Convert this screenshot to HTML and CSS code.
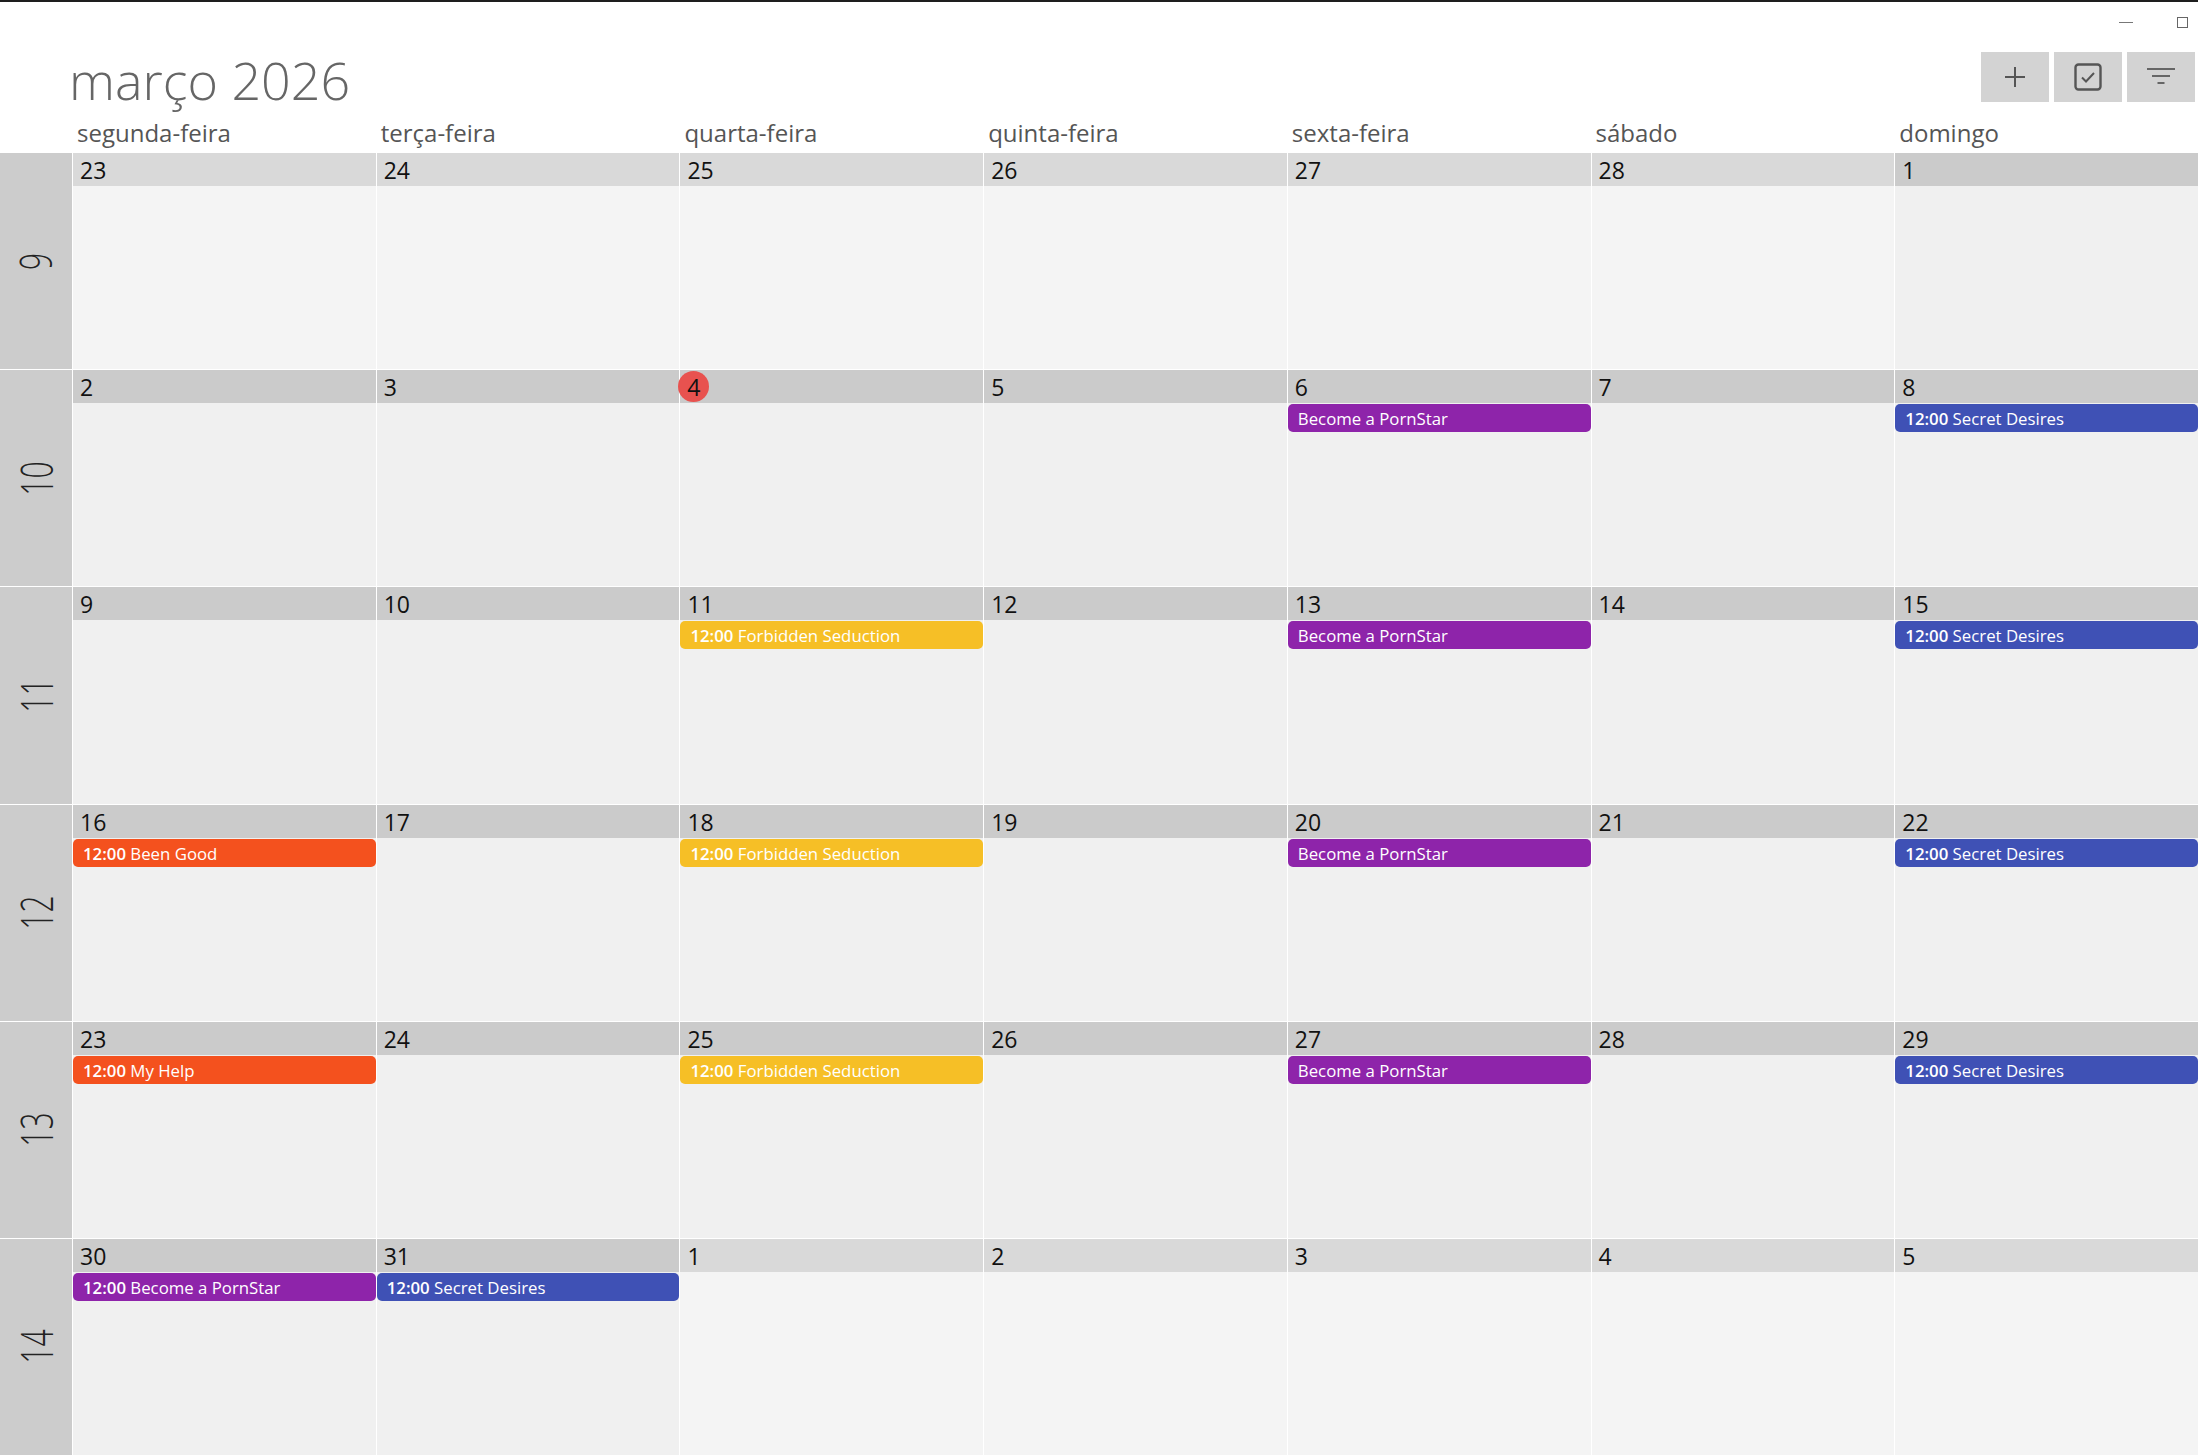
FILE: index.html
```html
<!DOCTYPE html>
<html lang="pt">
  <head>
    <meta charset="UTF-8" />
    <meta name="viewport" content="width=device-width, initial-scale=1.0" />
    <title>Calendário</title>
    <link rel="stylesheet" href="styles.css">
  </head>
  <body>
    <div id="caption">
      <span class="win-min"></span>
      <span class="win-max"></span>
    </div>
    <div id="head">
      <h1 class="title">março 2026</h1>
      <div class="tools">
        <a href="javascript:;" class="tool">
          <svg width="22" height="22" viewBox="0 0 22 22"><path d="M11 1v20M1 11h20" stroke="#555" stroke-width="2" fill="none"/></svg>
        </a>
        <a href="javascript:;" class="tool">
          <svg width="28" height="28" viewBox="0 0 28 28"><rect x="1.5" y="1.5" width="25" height="25" rx="3" stroke="#555" stroke-width="2.4" fill="none"/><path d="M8 14.5l4 4 8-8.5" stroke="#555" stroke-width="2" fill="none"/></svg>
        </a>
        <a href="javascript:;" class="tool">
          <svg width="30" height="20" viewBox="0 0 30 20"><path d="M1 2h28M6 9h18M11.5 16h7" stroke="#666" stroke-width="2.2" fill="none"/></svg>
        </a>
      </div>
    </div>
    <div id="daynames">
      <span></span>
      <span>segunda-feira</span>
      <span>terça-feira</span>
      <span>quarta-feira</span>
      <span>quinta-feira</span>
      <span>sexta-feira</span>
      <span>sábado</span>
      <span>domingo</span>
    </div>
    <div id="month">
      <!-- semana 9 -->
      <div class="week"><span>9</span></div>
      <div class="day other"><div class="date"><span class="num">23</span></div></div>
      <div class="day other"><div class="date"><span class="num">24</span></div></div>
      <div class="day other"><div class="date"><span class="num">25</span></div></div>
      <div class="day other"><div class="date"><span class="num">26</span></div></div>
      <div class="day other"><div class="date"><span class="num">27</span></div></div>
      <div class="day other"><div class="date"><span class="num">28</span></div></div>
      <div class="day"><div class="date"><span class="num">1</span></div></div>

      <!-- semana 10 -->
      <div class="week"><span>10</span></div>
      <div class="day"><div class="date"><span class="num">2</span></div></div>
      <div class="day"><div class="date"><span class="num">3</span></div></div>
      <div class="day today"><div class="date"><span class="num">4</span></div></div>
      <div class="day"><div class="date"><span class="num">5</span></div></div>
      <div class="day"><div class="date"><span class="num">6</span></div>
        <div class="event grape">Become a PornStar</div></div>
      <div class="day"><div class="date"><span class="num">7</span></div></div>
      <div class="day"><div class="date"><span class="num">8</span></div>
        <div class="event blueberry"><b>12:00</b> Secret Desires</div></div>

      <!-- semana 11 -->
      <div class="week"><span>11</span></div>
      <div class="day"><div class="date"><span class="num">9</span></div></div>
      <div class="day"><div class="date"><span class="num">10</span></div></div>
      <div class="day"><div class="date"><span class="num">11</span></div>
        <div class="event banana"><b>12:00</b> Forbidden Seduction</div></div>
      <div class="day"><div class="date"><span class="num">12</span></div></div>
      <div class="day"><div class="date"><span class="num">13</span></div>
        <div class="event grape">Become a PornStar</div></div>
      <div class="day"><div class="date"><span class="num">14</span></div></div>
      <div class="day"><div class="date"><span class="num">15</span></div>
        <div class="event blueberry"><b>12:00</b> Secret Desires</div></div>

      <!-- semana 12 -->
      <div class="week"><span>12</span></div>
      <div class="day"><div class="date"><span class="num">16</span></div>
        <div class="event tangerine"><b>12:00</b> Been Good</div></div>
      <div class="day"><div class="date"><span class="num">17</span></div></div>
      <div class="day"><div class="date"><span class="num">18</span></div>
        <div class="event banana"><b>12:00</b> Forbidden Seduction</div></div>
      <div class="day"><div class="date"><span class="num">19</span></div></div>
      <div class="day"><div class="date"><span class="num">20</span></div>
        <div class="event grape">Become a PornStar</div></div>
      <div class="day"><div class="date"><span class="num">21</span></div></div>
      <div class="day"><div class="date"><span class="num">22</span></div>
        <div class="event blueberry"><b>12:00</b> Secret Desires</div></div>

      <!-- semana 13 -->
      <div class="week"><span>13</span></div>
      <div class="day"><div class="date"><span class="num">23</span></div>
        <div class="event tangerine"><b>12:00</b> My Help</div></div>
      <div class="day"><div class="date"><span class="num">24</span></div></div>
      <div class="day"><div class="date"><span class="num">25</span></div>
        <div class="event banana"><b>12:00</b> Forbidden Seduction</div></div>
      <div class="day"><div class="date"><span class="num">26</span></div></div>
      <div class="day"><div class="date"><span class="num">27</span></div>
        <div class="event grape">Become a PornStar</div></div>
      <div class="day"><div class="date"><span class="num">28</span></div></div>
      <div class="day"><div class="date"><span class="num">29</span></div>
        <div class="event blueberry"><b>12:00</b> Secret Desires</div></div>

      <!-- semana 14 -->
      <div class="week"><span>14</span></div>
      <div class="day"><div class="date"><span class="num">30</span></div>
        <div class="event grape"><b>12:00</b> Become a PornStar</div></div>
      <div class="day"><div class="date"><span class="num">31</span></div>
        <div class="event blueberry"><b>12:00</b> Secret Desires</div></div>
      <div class="day other"><div class="date"><span class="num">1</span></div></div>
      <div class="day other"><div class="date"><span class="num">2</span></div></div>
      <div class="day other"><div class="date"><span class="num">3</span></div></div>
      <div class="day other"><div class="date"><span class="num">4</span></div></div>
      <div class="day other"><div class="date"><span class="num">5</span></div></div>
    </div>
  </body>
</html>
```

FILE: styles.css
```css
html,
body {
  margin: 0;
  height: 100%;
}
body {
  box-sizing: border-box;
  display: flex;
  flex-direction: column;
  border-top: 2px solid #1e1e1e;
  background: #fff;
  font-family: "Open Sans", "Noto Sans", sans-serif;
  overflow: hidden;
}
#caption {
  display: flex;
  justify-content: flex-end;
  align-items: center;
  height: 40px;
  padding-right: 10px;
}
.win-min {
  width: 14px;
  height: 1px;
  margin-right: 44px;
  background: #777;
}
.win-max {
  width: 9px;
  height: 9px;
  border: 1px solid #666;
}
#head {
  display: flex;
  justify-content: space-between;
  align-items: flex-start;
  height: 73px;
}
.title {
  margin: 8px 0 0 69px;
  font-size: 52px;
  font-weight: 300;
  line-height: 60px;
  color: #666;
}
.tools {
  display: flex;
  gap: 5px;
  margin: 10px 3px 0 0;
}
.tool {
  display: flex;
  align-items: center;
  justify-content: center;
  width: 68px;
  height: 50px;
  background: #d3d3d3;
}
#daynames {
  display: grid;
  grid-template-columns: 72px repeat(7, 1fr);
  column-gap: 1px;
  height: 38px;
}
#daynames span {
  padding-left: 4px;
  font-size: 24px;
  line-height: 36px;
  color: #555;
}
#month {
  flex: 1;
  display: grid;
  grid-template-columns: 72px repeat(7, 1fr);
  grid-template-rows: repeat(6, 1fr);
  gap: 1px;
  background: #fff;
  min-height: 0;
}
.week {
  display: flex;
  align-items: center;
  justify-content: center;
  background: #ccc;
}
.week span {
  font-size: 30px;
  font-weight: 300;
  color: #222;
  transform: rotate(-90deg) scaleY(1.45);
}
.day {
  display: flex;
  flex-direction: column;
  min-width: 0;
  background: #f0f0f0;
}
.day.other {
  background: #f4f4f4;
}
.date {
  height: 33px;
  background: #cbcbcb;
  font-size: 23px;
  line-height: 34px;
  color: #111;
}
.day.other .date {
  background: #d9d9d9;
}
.num {
  display: inline-block;
  padding-left: 7px;
}
.today .num {
  width: 31px;
  height: 31px;
  margin: 1px 0 0 -2px;
  padding: 0;
  border-radius: 50%;
  background: #e8524f;
  line-height: 32px;
  text-align: center;
}
.event {
  height: 28px;
  margin-top: 1px;
  padding-left: 10px;
  border-radius: 5px;
  font-size: 16.8px;
  line-height: 30px;
  color: #fff;
  white-space: nowrap;
  overflow: hidden;
}
.event b {
  font-weight: 600;
}
.tangerine {
  background: #f4511e;
}
.banana {
  background: #f6bf26;
}
.grape {
  background: #8e24aa;
}
.blueberry {
  background: #3f51b5;
}
```
